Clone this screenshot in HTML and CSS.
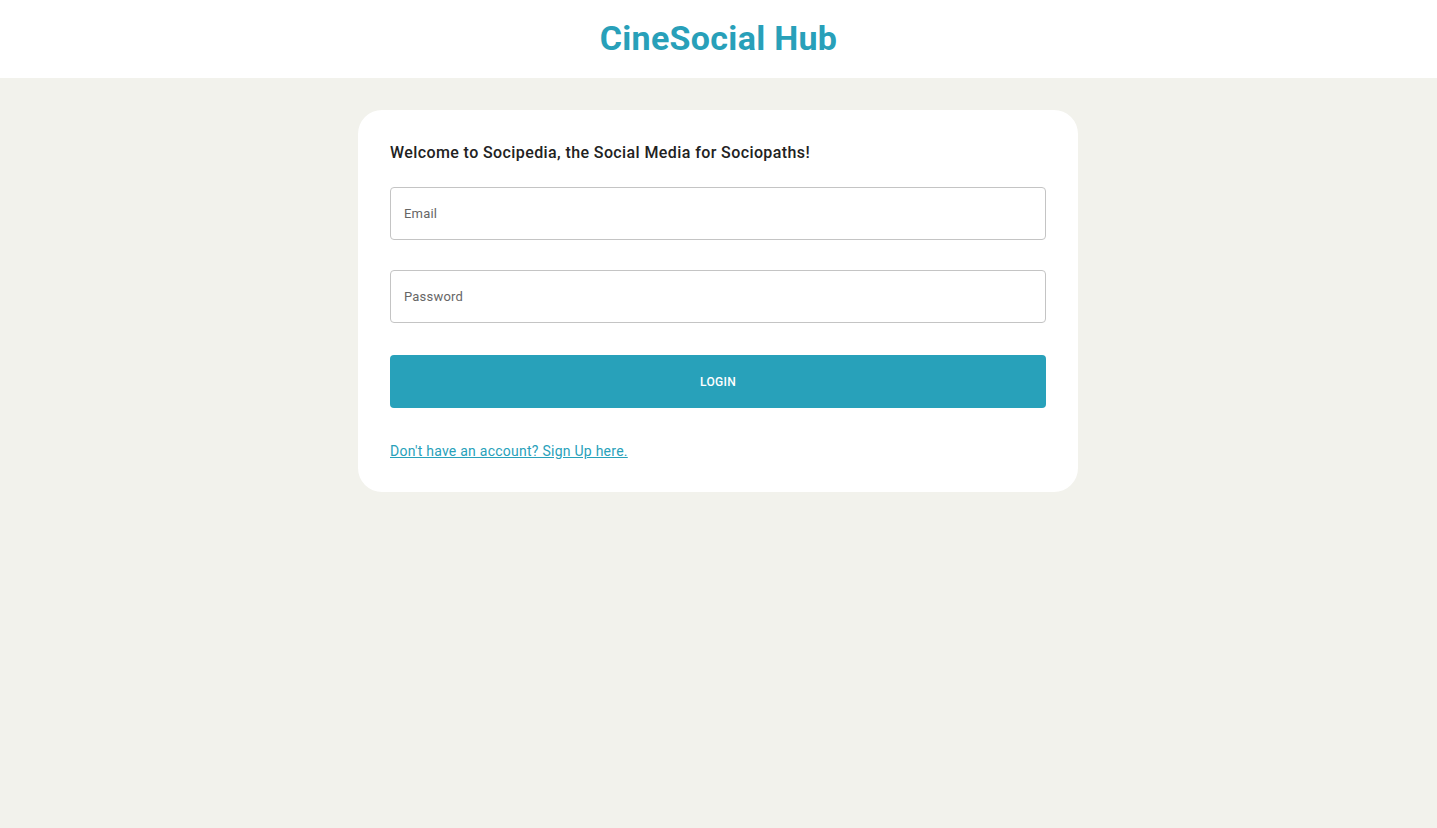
FILE: index.html
```html
<!DOCTYPE html>
<html lang="en">
<head>
<meta charset="utf-8">
<title>CineSocial Hub</title>
<link rel="stylesheet" href="styles.css">
</head>
<body>
<header class="topbar">
  <h1 class="brand">CineSocial Hub</h1>
</header>
<main class="page">
  <section class="card">
    <p class="welcome">Welcome to Socipedia, the Social Media for Sociopaths!</p>
    <form class="form">
      <div class="field"><span class="label">Email</span></div>
      <div class="field"><span class="label">Password</span></div>
      <button type="button" class="btn">LOGIN</button>
      <a class="switch" href="#">Don't have an account? Sign Up here.</a>
    </form>
  </section>
</main>
</body>
</html>
```
FILE: styles.css
```css
* { box-sizing: border-box; }
html, body { margin: 0; height: 100%; }
body {
  background: #f2f2ec;
  font-family: Roboto, "Liberation Sans", sans-serif;
  color: #333;
}
.topbar {
  background: #fff;
  height: 78px;
  display: flex;
  align-items: center;
  justify-content: center;
  padding-bottom: 2px;
}
.brand {
  margin: 0;
  font-size: 34px;
  font-weight: 700;
  color: #28a0b9;
  letter-spacing: 0.3px;
}
.page {
  display: flex;
  justify-content: center;
  padding-top: 32px;
  padding-right: 1px;
}
.card {
  width: 720px;
  background: #fff;
  border-radius: 24px;
  padding: 32px;
}
.welcome {
  margin: 0 0 24px;
  padding-top: 1px;
  font-size: 16px;
  font-weight: 500;
  line-height: 20px;
  letter-spacing: 0.4px;
  color: #222;
}
.form {
  display: flex;
  flex-direction: column;
}
.field {
  height: 53px;
  border: 1px solid #c4c4c4;
  border-radius: 4px;
  display: flex;
  align-items: center;
  padding: 0 13px;
  margin-bottom: 30px;
}
.field + .field { margin-bottom: 32px; }
.label {
  font-size: 13px;
  color: #666;
  letter-spacing: 0.2px;
}
.btn {
  height: 53px;
  border: none;
  border-radius: 4px;
  background: #28a1ba;
  color: #fff;
  font-family: inherit;
  font-size: 12px;
  font-weight: 500;
  letter-spacing: 0.3px;
  margin-bottom: 34px;
}
.switch {
  font-size: 14px;
  color: #28a1ba;
  text-decoration: underline;
  align-self: flex-start;
  line-height: 18px;
  letter-spacing: 0.25px;
}
```
